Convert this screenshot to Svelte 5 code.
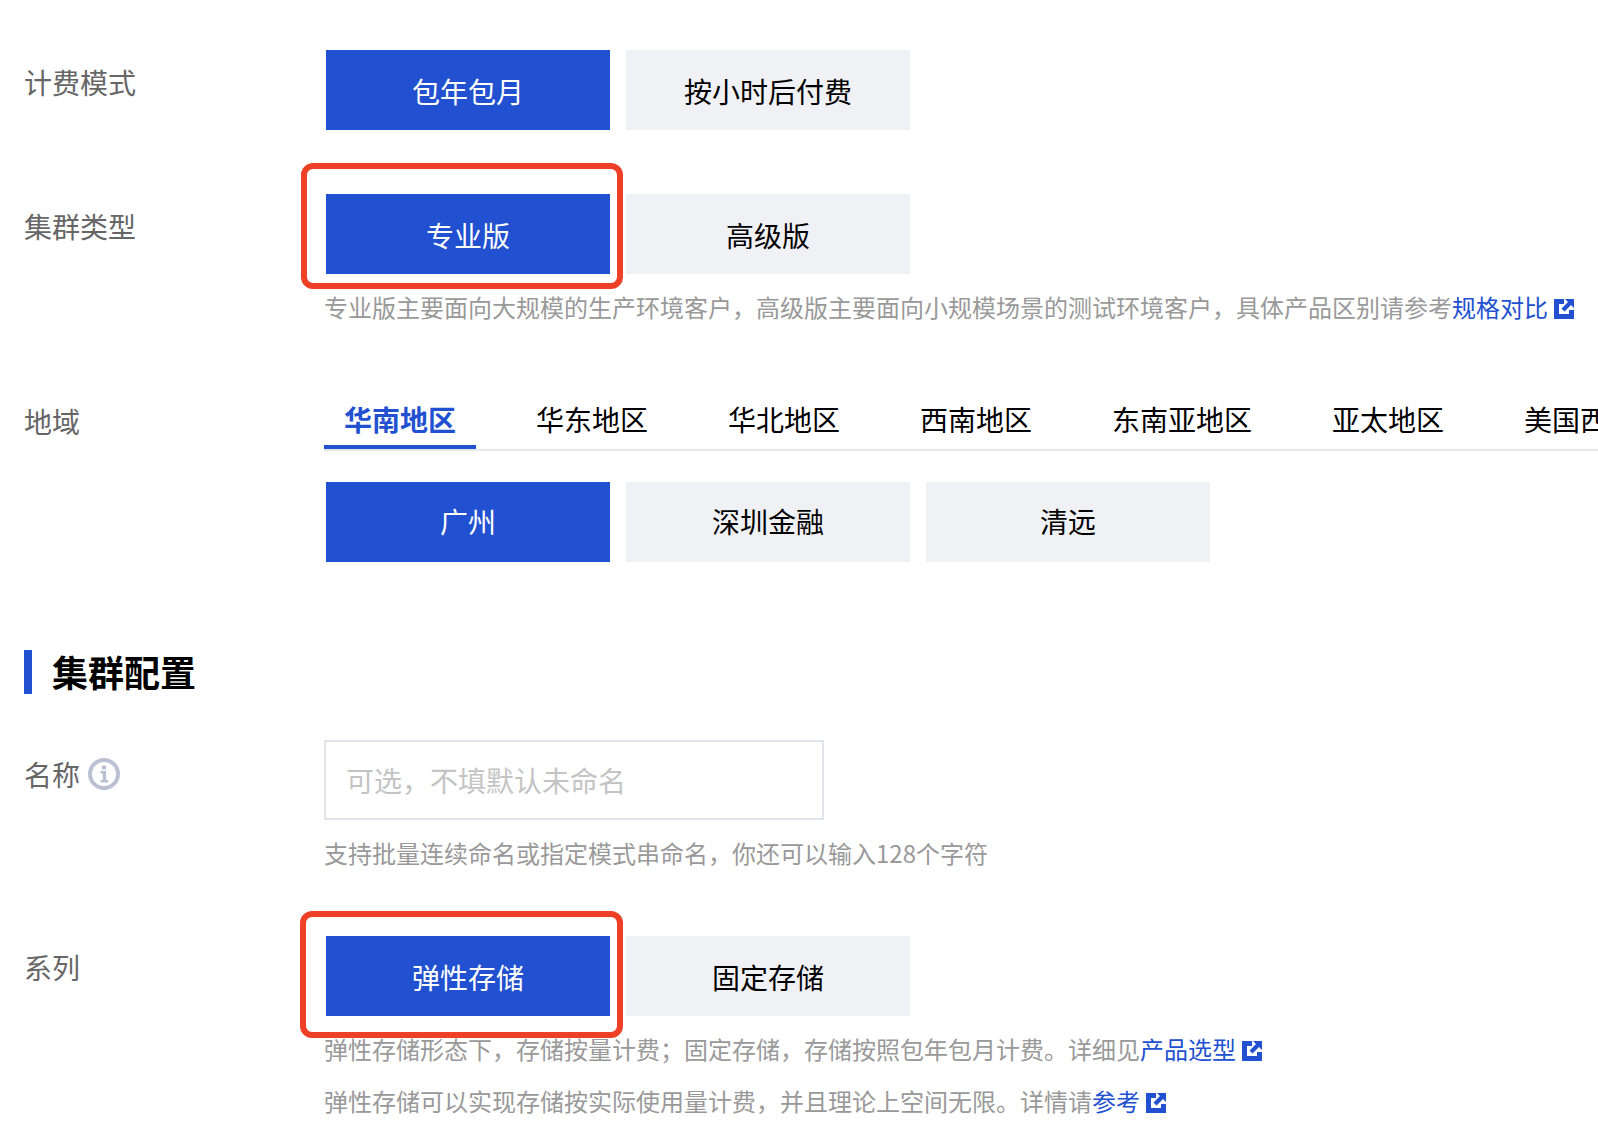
<script>
  const tabs = ['华南地区', '华东地区', '华北地区', '西南地区', '东南亚地区', '亚太地区', '美国西部'];
</script>

{#snippet linkIcon()}
  <svg class="ext" viewBox="0 0 20 20" width="20" height="20" aria-hidden="true">
    <path fill="#2150d0" d="M0 0h10v5H5v10h10v-4h5v9H0z" />
    <path fill="#2150d0" d="M11 0h9v9l-3-3-6.5 6.5-3-3L14 3z" />
  </svg>
{/snippet}

<div class="page">
  <div class="row first">
    <div class="label">计费模式</div>
    <div class="body">
      <div class="options">
        <div class="opt active">包年包月</div>
        <div class="opt">按小时后付费</div>
      </div>
    </div>
  </div>

  <div class="row cluster-type">
    <div class="label">集群类型</div>
    <div class="body">
      <div class="options">
        <div class="opt active">
          专业版
          <span class="mark mark-a"></span>
        </div>
        <div class="opt">高级版</div>
      </div>
      <p class="hint first-hint">专业版主要面向大规模的生产环境客户，高级版主要面向小规模场景的测试环境客户，具体产品区别请参考<a href="#spec">规格对比</a>{@render linkIcon()}</p>
    </div>
  </div>

  <div class="row region">
    <div class="label tab-label">地域</div>
    <div class="body">
      <div class="tabs">
        {#each tabs as tab, i}
          <div class="tab" class:current={i === 0}>{tab}</div>
        {/each}
      </div>
      <div class="options cities">
        <div class="opt active">广州</div>
        <div class="opt">深圳金融</div>
        <div class="opt">清远</div>
      </div>
    </div>
  </div>

  <h2 class="heading">集群配置</h2>

  <div class="row name">
    <div class="label name-label">
      名称
      <svg class="info" viewBox="0 0 32 32" width="32" height="32" aria-hidden="true">
        <circle cx="16" cy="16" r="14" fill="none" stroke="#b9c1d2" stroke-width="4" />
        <circle cx="16" cy="9.5" r="2.3" fill="#b9c1d2" />
        <path fill="#b9c1d2" d="M12.5 13h5.6v9h2v2.4h-7.6V22h2.2v-6.6h-2.2z" />
      </svg>
    </div>
    <div class="body">
      <input class="field" placeholder="可选，不填默认未命名" />
      <p class="hint name-hint">支持批量连续命名或指定模式串命名，你还可以输入128个字符</p>
    </div>
  </div>

  <div class="row series">
    <div class="label series-label">系列</div>
    <div class="body">
      <div class="options">
        <div class="opt active">
          弹性存储
          <span class="mark mark-b"></span>
        </div>
        <div class="opt">固定存储</div>
      </div>
      <p class="hint first-hint">弹性存储形态下，存储按量计费；固定存储，存储按照包年包月计费。详细见<a href="#pick">产品选型</a>{@render linkIcon()}</p>
      <p class="hint second-hint">弹性存储可以实现存储按实际使用量计费，并且理论上空间无限。详情请<a href="#ref">参考</a>{@render linkIcon()}</p>
    </div>
  </div>
</div>

<style>
  :global(body) {
    background: #fff;
  }

  .page {
    width: 1598px;
    height: 1146px;
    padding: 50px 0 0 24px;
    box-sizing: border-box;
    overflow: hidden;
    font-family: "Noto Sans CJK SC", "Liberation Sans", sans-serif;
    font-size: 28px;
    color: #000;
  }

  .row {
    display: grid;
    grid-template-columns: 300px 1274px;
  }

  .cluster-type {
    margin-top: 64px;
  }

  .region {
    margin-top: 67px;
  }

  .name {
    margin-top: 46px;
  }

  .series {
    margin-top: 65px;
  }

  .label {
    display: flex;
    align-items: center;
    gap: 8px;
    height: 40px;
    margin-top: 12px;
    color: #666;
  }

  .tab-label {
    margin-top: 9px;
  }

  .name-label {
    margin-top: 14px;
  }

  .series-label {
    margin-top: 11px;
  }

  .body {
    min-width: 0;
  }

  .options {
    display: flex;
    gap: 16px;
    padding-left: 2px;
  }

  .cities {
    margin-top: 31px;
  }

  .opt {
    position: relative;
    width: 284px;
    height: 80px;
    box-sizing: border-box;
    padding-top: 2px;
    display: flex;
    align-items: center;
    justify-content: center;
    background: #f0f1f5;
  }

  .cities .opt {
    padding: 0 0 2px;
  }

  .opt.active {
    background: #2150d0;
    color: #fff;
  }

  .mark {
    position: absolute;
    border: 6px solid #ee4026;
    border-radius: 12px;
    box-sizing: border-box;
  }

  .mark-a {
    inset: -31px -13px -15px -25px;
  }

  .mark-b {
    inset: -25px -13px -22px -26px;
  }

  .hint {
    margin: 0;
    font-size: 24px;
    line-height: 36px;
    color: #999;
    white-space: nowrap;
  }

  .hint a {
    color: #2150d0;
    text-decoration: none;
  }

  .first-hint {
    margin-top: 15px;
  }

  .second-hint {
    margin-top: 16px;
  }

  .name-hint {
    margin-top: 15px;
  }

  .ext {
    margin-left: 6px;
    vertical-align: -2px;
  }

  .tabs {
    display: flex;
    gap: 40px;
    height: 57px;
    border-bottom: 2px solid #e6e7ec;
    overflow: hidden;
  }

  .tab {
    flex: none;
    height: 57px;
    box-sizing: border-box;
    padding: 0 20px;
    line-height: 54px;
  }

  .tab.current {
    color: #2150d0;
    font-weight: 700;
    border-bottom: 4px solid #2150d0;
  }

  .heading {
    margin: 88px 0 0;
    height: 44px;
    padding-left: 20px;
    border-left: 8px solid #2150d0;
    font-size: 36px;
    font-weight: 700;
    line-height: 42px;
  }

  .info {
    flex: none;
  }

  .field {
    display: block;
    width: 500px;
    height: 80px;
    box-sizing: border-box;
    padding: 0 20px;
    border: 2px solid #dfe3ea;
    border-radius: 0;
    outline: none;
    font: inherit;
    color: #000;
  }

  .field::placeholder {
    color: #c4c4c4;
    opacity: 1;
  }
</style>
